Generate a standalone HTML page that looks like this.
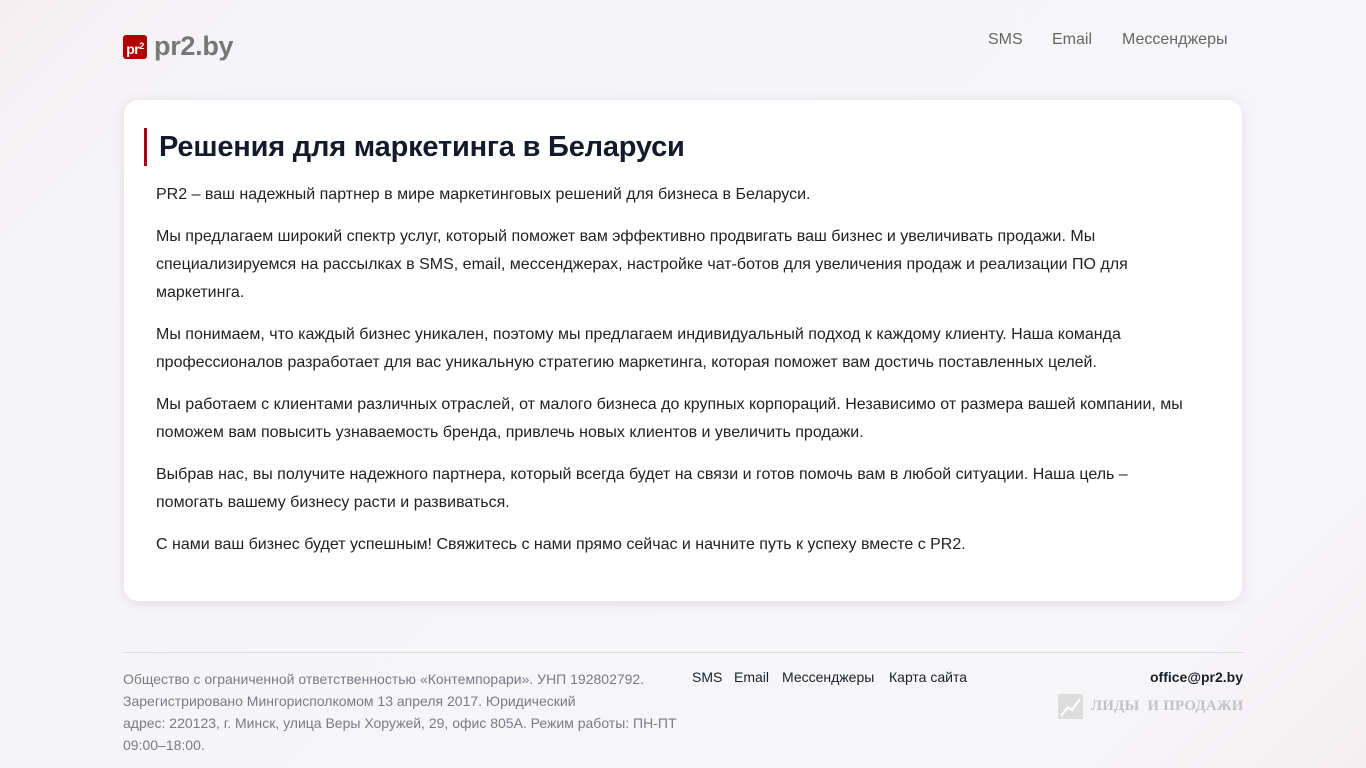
<!DOCTYPE html>
<html><head><meta charset="utf-8"><style>
*{margin:0;padding:0;box-sizing:border-box}
body{width:1366px;height:768px;overflow:hidden;font-family:"Liberation Sans",sans-serif;background:linear-gradient(135deg,#f5eef0 0%,#f5f5f9 15%,#f6f6f9 85%,#f5eef0 100%);position:relative;color:#1b1f2a}
.logo{position:absolute;left:123px;top:31px;display:flex;align-items:center}
.logo .ic{width:24px;height:24px;background:#b00000;border-radius:3px;color:#fff;font-weight:bold;font-size:14px;line-height:22px;text-align:center;letter-spacing:-0.5px}
.logo .ic sup{font-size:9px;vertical-align:5px}
.logo .t{font-size:27px;font-weight:bold;color:#777;margin-left:7px;letter-spacing:-0.3px}
.nav{position:absolute;top:31px;font-size:16px;color:#666}
.card{position:absolute;left:124px;top:100px;width:1118px;height:501px;background:#fff;border-radius:14px;box-shadow:0 2px 12px rgba(160,100,120,0.18)}
h1{position:absolute;left:20px;top:28px;border-left:3px solid #b0000f;padding-left:12px;font-size:29px;line-height:38px;font-weight:bold;color:#141a2a;letter-spacing:-0.2px}
.txt{position:absolute;left:32px;top:81px;font-size:16px;line-height:28px;color:#222;white-space:nowrap;font-weight:normal}
.txt p{margin-bottom:14px}
.hr{position:absolute;left:123px;top:652px;width:1120px;height:1px;background:#ddd}
.fl{position:absolute;left:123px;top:668px;font-size:14px;line-height:22px;color:#7a7a86;white-space:nowrap}
.fn{position:absolute;top:669px;font-size:14px;color:#1b1f2a}
.em{position:absolute;right:123px;top:669px;font-size:14px;font-weight:bold;color:#1b1f2a}
.ld{position:absolute;left:1058px;top:694px;display:flex;align-items:center;color:#c2c2c6;font-family:"Liberation Serif",serif;font-weight:bold;font-size:14.8px;letter-spacing:0.3px}
.ld .b{width:25px;height:25px;background:#ddd;margin-right:8px;position:relative}
</style></head><body>
<div class="logo"><div class="ic">pr<sup>2</sup></div><div class="t">pr2.by</div></div>
<div class="nav" style="left:988px">SMS</div>
<div class="nav" style="left:1052px">Email</div>
<div class="nav" style="left:1122px">Мессенджеры</div>
<div class="card">
<h1>Решения для маркетинга в Беларуси</h1>
<div class="txt">
<p>PR2 – ваш надежный партнер в мире маркетинговых решений для бизнеса в Беларуси.</p>
<p>Мы предлагаем широкий спектр услуг, который поможет вам эффективно продвигать ваш бизнес и увеличивать продажи. Мы<br>специализируемся на рассылках в SMS, email, мессенджерах, настройке чат-ботов для увеличения продаж и реализации ПО для<br>маркетинга.</p>
<p>Мы понимаем, что каждый бизнес уникален, поэтому мы предлагаем индивидуальный подход к каждому клиенту. Наша команда<br>профессионалов разработает для вас уникальную стратегию маркетинга, которая поможет вам достичь поставленных целей.</p>
<p>Мы работаем с клиентами различных отраслей, от малого бизнеса до крупных корпораций. Независимо от размера вашей компании, мы<br>поможем вам повысить узнаваемость бренда, привлечь новых клиентов и увеличить продажи.</p>
<p>Выбрав нас, вы получите надежного партнера, который всегда будет на связи и готов помочь вам в любой ситуации. Наша цель –<br>помогать вашему бизнесу расти и развиваться.</p>
<p>С нами ваш бизнес будет успешным! Свяжитесь с нами прямо сейчас и начните путь к успеху вместе с PR2.</p>
</div></div>
<div class="hr"></div>
<div class="fl">Общество с ограниченной ответственностью «Контемпорари». УНП 192802792.<br>Зарегистрировано Мингорисполкомом 13 апреля 2017. Юридический<br>адрес: 220123, г. Минск, улица Веры Хоружей, 29, офис 805А. Режим работы: ПН-ПТ<br>09:00–18:00.</div>
<div class="fn" style="left:692px">SMS</div>
<div class="fn" style="left:734px">Email</div>
<div class="fn" style="left:782px">Мессенджеры</div>
<div class="fn" style="left:889px">Карта сайта</div>
<div class="em">office@pr2.by</div>
<div class="ld"><div class="b"><svg width="25" height="25"><path d="M3 22 L10 13 L14 16 L22 5" stroke="#fff" stroke-width="2" fill="none"/></svg></div>ЛИДЫ&nbsp; И ПРОДАЖИ</div>
</body></html>
